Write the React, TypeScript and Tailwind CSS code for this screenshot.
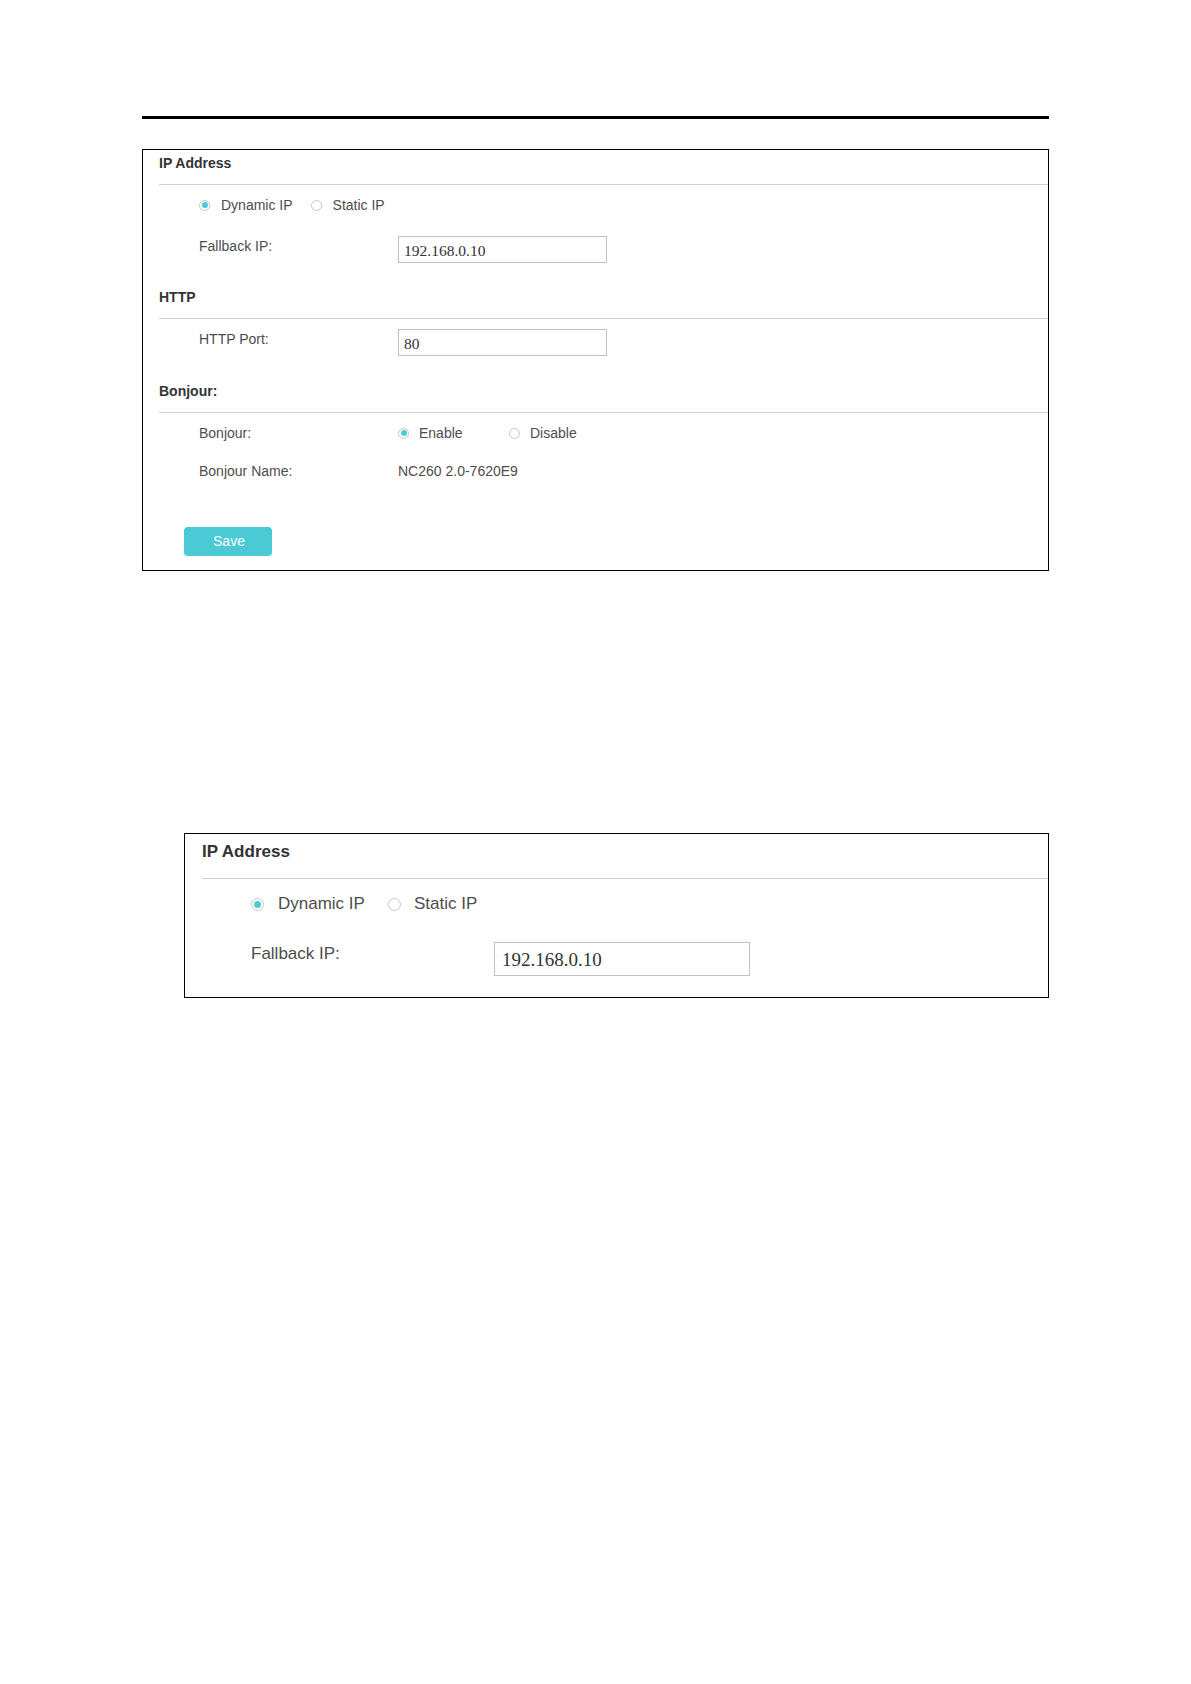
import clsx from "clsx"

function Radio({ checked, big }: { checked?: boolean; big?: boolean }) {
    return (
        <span
            className={clsx(
                "flex shrink-0 items-center justify-center rounded-full border border-[#c6c6c6] bg-white",
                big ? "h-[13px] w-[13px]" : "h-[11px] w-[11px]"
            )}
        >
            {checked && (
                <span
                    className={clsx(
                        "rounded-full bg-[#4acbd6]",
                        big ? "h-[7px] w-[7px]" : "h-[6px] w-[6px]"
                    )}
                />
            )}
        </span>
    )
}

function Heading({ children }: { children: React.ReactNode }) {
    return (
        <div className="pl-[16px] text-[14px] leading-[20px] font-bold text-[#333]">
            {children}
        </div>
    )
}

function Divider() {
    return <div className="ml-[16px] mt-[11px] h-px bg-[#d2d2d2]" />
}

function Field({ value }: { value: string }) {
    return (
        <div className="flex h-[27px] w-[209px] items-center border border-[#c2c2c2] bg-white pl-[5px] pt-[2px] font-['Liberation_Serif',serif] text-[15.5px] text-[#333]">
            {value}
        </div>
    )
}

export default function App() {
    return (
        <div className="min-h-[1684px] bg-white font-['Liberation_Sans',Arial,sans-serif] text-[#4d4d4d]">
            <div className="pl-[142px] pt-[116px]">
                <div className="h-[3px] w-[907px] bg-black" />

                {/* settings panel */}
                <div className="mt-[30px] w-[907px] border border-black pt-[3px] pb-[14px]">
                    <Heading>IP Address</Heading>
                    <Divider />
                    <div className="ml-[56px] mt-[10px] flex h-[20px] items-center text-[14px]">
                        <Radio checked />
                        <span className="ml-[11px]">Dynamic IP</span>
                        <span className="ml-[18px]">
                            <Radio />
                        </span>
                        <span className="ml-[11px]">Static IP</span>
                    </div>
                    <div className="ml-[56px] mt-[21px] flex items-start text-[14px]">
                        <span className="w-[199px] leading-[20px]">Fallback IP:</span>
                        <Field value="192.168.0.10" />
                    </div>

                    <div className="mt-[24px]">
                        <Heading>HTTP</Heading>
                    </div>
                    <Divider />
                    <div className="ml-[56px] mt-[10px] flex items-start text-[14px]">
                        <span className="w-[199px] leading-[20px]">HTTP Port:</span>
                        <Field value="80" />
                    </div>

                    <div className="mt-[25px]">
                        <Heading>Bonjour:</Heading>
                    </div>
                    <Divider />
                    <div className="ml-[56px] mt-[10px] flex h-[20px] items-center text-[14px]">
                        <span className="w-[199px]">Bonjour:</span>
                        <span className="flex w-[111px] items-center">
                            <Radio checked />
                            <span className="ml-[10px]">Enable</span>
                        </span>
                        <span className="flex items-center">
                            <Radio />
                            <span className="ml-[10px]">Disable</span>
                        </span>
                    </div>
                    <div className="ml-[56px] mt-[18px] flex h-[20px] items-center text-[14px]">
                        <span className="w-[199px]">Bonjour Name:</span>
                        <span>NC260 2.0-7620E9</span>
                    </div>

                    <button className="ml-[41px] mt-[46px] flex h-[29px] w-[88px] items-center justify-center rounded-[4px] bg-[#4bcad6] pl-[2px] text-[14px] text-white">
                        Save
                    </button>
                </div>

                {/* enlarged detail */}
                <div className="ml-[42px] mt-[262px] w-[865px] border border-black pt-[6px] pb-[21px]">
                    <div className="pl-[17px] text-[17px] leading-[24px] font-bold text-[#333]">
                        IP Address
                    </div>
                    <div className="ml-[17px] mt-[14px] h-px bg-[#d2d2d2]" />
                    <div className="ml-[66px] mt-[13px] flex h-[24px] items-center text-[17px]">
                        <Radio checked big />
                        <span className="ml-[14px]">Dynamic IP</span>
                        <span className="ml-[23px]">
                            <Radio big />
                        </span>
                        <span className="ml-[13px]">Static IP</span>
                    </div>
                    <div className="ml-[66px] mt-[26px] flex items-start text-[17px]">
                        <span className="w-[243px] leading-[24px]">Fallback IP:</span>
                        <div className="flex h-[34px] w-[256px] items-center border border-[#c2c2c2] bg-white pl-[7px] pt-[2px] font-['Liberation_Serif',serif] text-[19px] text-[#333]">
                            192.168.0.10
                        </div>
                    </div>
                </div>
            </div>
        </div>
    )
}
